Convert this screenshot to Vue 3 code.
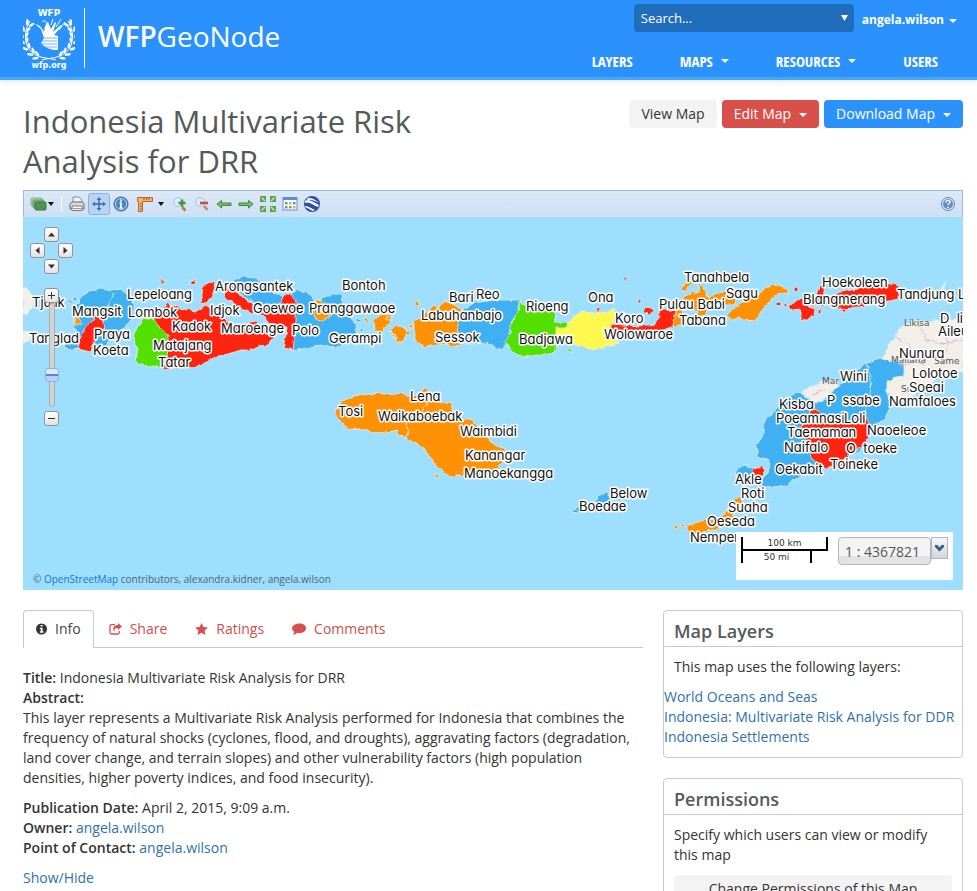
<script setup>
import { ref } from 'vue'

const scale = ref('1 : 4367821')
const zoom = ref(27)
const search = ref('')

const color = { b: '#3fb1f2', r: '#ff2410', o: '#ff9204', g: '#53e000', y: '#fff94f', w: '#f2efe9' }

const shapes = [
  ['w', '23,288 27,288 32,295 33,308 26,315 23,315'],
  ['w', '23,331 30,332 31,340 23,343'],
  ['b', '76,304 82,296 90,291 100,288 107,289 113,291 122,290 133,299 133,318 124,327 118,334 110,339 104,350 80,349 72,350 62,345 76,340 74,318'],
  ['r', '97,308 102,316 104,328 95,338 91,352 78,349 80,339 86,327 94,318'],
  ['o', '74,319 80,319 82,322 80,325 74,325'],
  ['r', '153,319 168,303 180,308 195,312 206,305 216,310 226,321 238,326 256,322 268,330 277,334 268,345 260,346 252,350 240,350 228,354 215,357 200,366 180,368 163,370 160,340'],
  ['g', '146,317 155,321 168,335 168,345 167,358 163,370 154,366 148,367 136,362 138,349 133,338 138,325'],
  ['r', '201,303 203,286 207,283 216,281 214,291 207,304'],
  ['r', '191,281 196,281 195,284 191,285'],
  ['r', '222,286 233,290 244,297 257,307 253,314 238,308 226,297'],
  ['b', '229,284 236,279 244,277 257,278 264,286 270,292 284,297 280,304 268,309 256,303 246,298 238,291 229,289'],
  ['b', '291,292 306,291 313,299 320,305 320,297 328,295 341,295 342,306 350,317 356,324 356,334 346,342 334,348 320,345 305,348 293,351'],
  ['r', '254,309 270,305 280,303 286,295 291,292 296,303 296,327 293,350 283,348 287,328 273,325 263,316'],
  ['o', '315,309 318,299 325,305 332,309 331,316 320,321 315,317'],
  ['o', '374,320 382,314 392,315 392,321 385,327 382,334 375,331'],
  ['o', '397,326 405,327 407,332 403,344 396,341 396,334 389,331'],
  ['o', '414,321 424,316 434,306 438,308 444,301 451,303 458,307 463,311 460,346 444,344 425,347 414,340'],
  ['b', '459,311 475,303 487,301 500,300 519,300 520,310 512,320 511,333 508,342 502,350 486,343 470,344 458,343 457,334'],
  ['g', '519,302 529,307 540,309 554,312 556,322 567,322 568,328 557,330 556,351 548,354 522,357 512,351 505,342 511,332 511,322 518,312'],
  ['y', '556,328 566,328 572,318 580,312 596,313 608,312 616,308 614,319 612,339 619,343 602,347 594,350 581,347 570,342 556,338'],
  ['r', '611,324 624,325 640,326 655,324 660,318 658,310 677,310 674,326 663,330 644,334 628,332 611,332'],
  ['r', '644,309 648,307 653,310 651,314 645,313'],
  ['o', '676,311 682,308 685,320 680,326 673,326'],
  ['o', '684,298 692,292 699,292 700,283 706,293 709,298 716,295 722,290 732,290 736,298 735,305 724,305 713,304 704,315 698,317 697,310 689,308 684,303'],
  ['o', '681,287 691,279 693,283 684,290'],
  ['o', '725,316 736,307 746,300 757,296 762,290 774,284 787,288 788,293 777,294 771,301 765,307 758,315 756,321 743,320 739,317 733,320'],
  ['r', '788,307 796,301 802,298 805,305 814,309 813,315 807,320 801,319 801,310 791,311'],
  ['r', '811,307 820,285 825,287 823,297 831,304'],
  ['r', '830,296 846,290 863,287 880,285 893,283 899,286 898,299 885,302 874,302 860,308 838,309 830,307'],
  ['w', '963,318 952,320 940,321 929,321 917,321 903,325 896,333 896,338 889,345 883,357 880,363 892,367 903,366 905,373 891,377 885,379 886,389 893,398 904,400 915,393 928,389 936,378 952,375 963,372'],
  ['w', '802,393 811,387 823,381 836,379 839,387 829,393 823,398 820,406 811,399'],
  ['w', '940,292 945,283 943,293'],
  ['b', '790,397 798,391 806,397 815,403 824,402 832,392 843,384 855,372 866,363 879,358 891,361 904,364 904,376 896,377 887,381 887,394 891,405 885,418 876,425 870,426 865,445 856,454 843,456 838,465 820,468 800,476 786,486 765,487 759,482 768,473 770,461 757,456 757,444 764,434 765,419 776,410'],
  ['r', '811,407 818,411 835,422 850,421 862,420 866,417 870,425 869,437 862,447 850,454 844,460 841,467 824,468 811,458 808,447 804,437 800,427 808,419'],
  ['b', '737,471 746,464 749,468 759,470 758,482 746,484 736,481'],
  ['r', '752,470 761,466 766,470 761,479 753,475'],
  ['o', '688,526 701,521 714,519 725,513 733,502 741,494 742,506 734,514 733,522 722,528 708,531 692,534 688,531'],
  ['b', '593,504 600,494 608,492 612,501 602,507'],
  ['b', '571,512 579,507 585,509 577,513'],
  ['o', '335,411 342,401 353,397 369,394 383,393 395,395 399,393 411,398 421,392 425,386 429,392 439,401 451,404 454,417 463,420 471,418 478,427 488,439 495,446 504,448 507,455 501,463 495,471 474,479 464,476 450,476 439,468 432,460 424,448 412,441 402,436 396,431 384,432 376,434 367,430 350,429 340,421']
]

const specks = [
  [75, 299, 'b'], [70, 302, 'b'], [130, 334, 'b'], [162, 282, 'r'], [358, 320, 'b'], [361, 330, 'b'],
  [388, 318, 'o'], [393, 335, 'o'], [411, 327, 'o'], [418, 304, 'o'], [408, 333, 'o'], [598, 310, 'r'],
  [625, 279, 'r'], [640, 301, 'r'], [570, 350, 'g'], [796, 289, 'r'], [779, 304, 'r'], [820, 312, 'r'],
  [437, 476, 'o'], [676, 527, 'o'], [683, 526, 'o'], [785, 305, 'r'], [844, 310, 'r'], [366, 320, 'o']
]

const towns = [
  ['Tjulik', 32, 307], ['Tanglad', 29, 343], ['Mangsit', 72, 316], ['Praya', 94, 339], ['Koeta', 93, 355],
  ['Lepeloang', 127, 299], ['Lombok', 128, 317], ['Kadok', 172, 331], ['Idjok', 210, 315],
  ['Arongsantek', 215, 291], ['Goewoe', 253, 313], ['Maroenge', 221, 333], ['Polo', 292, 335],
  ['Matajang', 153, 350], ['Tatar', 158, 367], ['Bontoh', 342, 290], ['Pranggawaoe', 309, 313],
  ['Gerampi', 329, 343], ['Bari', 449, 302], ['Reo', 476, 299], ['Labuhanbajo', 421, 320],
  ['Sessok', 435, 342], ['Rioeng', 526, 311], ['Badjawa', 519, 344], ['Ona', 588, 302],
  ['Koro', 615, 323], ['Wolowaroe', 604, 339], ['Pulau Babi', 659, 309], ['Tabana', 679, 325],
  ['Tanahbela', 684, 282], ['Sagu', 726, 298], ['Hoekoleen', 822, 287], ['Blangmerang', 803, 304],
  ['Tandjung Li', 897, 299], ['D  li', 940, 323], ['Aileu', 938, 336], ['Nunura', 899, 358],
  ['Lolotoe', 912, 378], ['Soeai', 909, 392], ['Namfaloes', 889, 406], ['Wini', 840, 381],
  ['P  ssabe', 827, 405], ['Kisba', 779, 409], ['Poeamnasi', 776, 423], ['Loli', 844, 423],
  ['Taemaman', 787, 437], ['Naoeleoe', 867, 435], ['Naifalo', 784, 452], ['O  toeke', 846, 453],
  ['Toineke', 830, 469], ['Oekabit', 775, 474], ['Akle', 735, 484], ['Roti', 741, 498],
  ['Suaha', 728, 512], ['Oeseda', 707, 526], ['Nemper', 690, 542], ['Below', 610, 498],
  ['Boedae', 579, 511], ['Lena', 410, 401], ['Tosi', 338, 416], ['Waikaboebak', 378, 421],
  ['Waimbidi', 460, 436], ['Kanangar', 465, 460], ['Manoekangga', 464, 478]
]

const basemap = [['Likisa', 904, 326], ['Maliana', 891, 363], ['Same', 934, 364], ['Mar', 822, 384], ['Su', 901, 392]]

// Leaves of the laurel wreath: position along each branch and tilt
const leaves = [
  [28, 22, 30], [25, 28, 10], [24, 34, -5], [25, 40, -20], [28, 46, -40], [33, 51, -55], [38, 54, -70]
]
</script>

<template>
  <header class="top">
    <a class="brand" href="#">
      <svg class="emblem" viewBox="0 0 52 64" aria-hidden="true">
        <text x="26" y="10" class="emblem-top">WFP</text>
        <g v-for="side in [1, -1]" :key="side" :transform="side === 1 ? '' : 'translate(52 0) scale(-1 1)'">
          <path d="M7 15C0 26 0 44 15 50c7 3 13 2 18 4" fill="none" stroke="#fff" stroke-width="1" />
          <g v-for="(l, i) in leaves" :key="i" :transform="`translate(${l[0] - 23} ${l[1] - 3}) rotate(${l[2]})`">
            <ellipse cx="-2" cy="-2" rx="1.3" ry="3.2" transform="rotate(-28 -2 -2)" fill="#fff" />
            <ellipse cx="3" cy="-2" rx="1.3" ry="3" transform="rotate(30 3 -2)" fill="#fff" />
          </g>
        </g>
        <path d="M12 18c5 1 7 4 9 8l1-6 3-4 3 7 4-7 1 1-3 9 8-7 1 1-8 9 4 1v14c-6 0-12-1-17-7l3-5-3-9z" fill="#fff" />
        <path d="M16 35h18M18 38h16M22 41h12M18 32h16" stroke="#2b92fd" stroke-width="0.7" />
        <path d="M19 16c2-2 5-1 5 2M33 21l5-8M36 24l6-8M28 19l2-6" stroke="#fff" fill="none" stroke-width="1" />
        <text x="26" y="62" class="emblem-base">wfp.org</text>
      </svg>
      <span class="brand-name"><b>WFP</b>GeoNode</span>
    </a>
    <div class="top-right">
      <div class="account">
        <div class="search">
          <input v-model="search" type="text" placeholder="Search..." aria-label="Search" />
          <svg viewBox="0 0 8 7" width="7" height="6" aria-hidden="true"><path d="M0 0h8L4 7z" fill="#fff" /></svg>
        </div>
        <button type="button" class="user">angela.wilson<i class="caret"></i></button>
      </div>
      <nav class="menu">
        <a href="#">LAYERS</a>
        <a href="#">MAPS<i class="caret"></i></a>
        <a href="#">RESOURCES<i class="caret"></i></a>
        <a href="#">USERS</a>
      </nav>
    </div>
  </header>

  <main class="page">
    <div class="heading">
      <h1>Indonesia Multivariate Risk Analysis for DRR</h1>
      <div class="actions">
        <button type="button" class="btn plain">View Map</button>
        <button type="button" class="btn danger">Edit Map<i class="caret"></i></button>
        <button type="button" class="btn primary">Download Map<i class="caret"></i></button>
      </div>
    </div>

    <section class="viewer">
      <div class="toolbar">
        <button type="button" class="tool layers" aria-label="Layers">
          <svg viewBox="0 0 18 16" width="18" height="16">
            <rect x="1" y="2" width="11" height="8" rx="1" fill="#a9cba8" stroke="#8db58c" />
            <rect x="3" y="4" width="11" height="8" rx="1" fill="#7fb17c" stroke="#6ba26b" />
            <rect x="5" y="6" width="11" height="8" rx="1" fill="#4e9450" stroke="#3d7a40" />
          </svg>
          <i class="arrow"></i>
        </button>
        <span class="divider"></span>
        <button type="button" class="tool" aria-label="Print">
          <svg viewBox="0 0 16 16" width="16" height="16">
            <path d="M4 8V1h6l3 3v4z" fill="#e8f3ff" stroke="#6f8fb5" />
            <path d="M1 8l2-2h10l2 2v5H1z" fill="#ddd" stroke="#666" />
            <path d="M3 10h10v4.500H3z" fill="#fff" stroke="#777" /><path d="M4 12.500h8" stroke="#999" />
          </svg>
        </button>
        <button type="button" class="tool active" aria-label="Pan map">
          <svg viewBox="0 0 16 16" width="16" height="16">
            <path d="M8 3v10M3 8h10" stroke="#3a64a8" stroke-width="1.300" />
            <path d="M8 1l2.500 3h-5zM8 15l-2.500-3h5zM1 8l3-2.500v5zM15 8l-3 2.500v-5z" fill="#4270b5" />
          </svg>
        </button>
        <button type="button" class="tool" aria-label="Feature info">
          <svg viewBox="0 0 16 16" width="16" height="16">
            <circle cx="8" cy="8" r="7" fill="#4b83c3" stroke="#3867a6" /><circle cx="8" cy="8" r="5.600" fill="none" stroke="#b9d3ef" />
            <path d="M8 3.500v2M6.500 7H8v5M6.500 12h3" stroke="#fff" stroke-width="1.700" fill="none" />
          </svg>
        </button>
        <button type="button" class="tool measure" aria-label="Measure">
          <svg viewBox="0 0 16 16" width="16" height="16">
            <path d="M0.500 1.500h15v4H5.500v10h-4v-10h-1z" fill="#f6b26b" stroke="#b56a28" />
            <path d="M7 2v2M9.500 2v2M12 2v2M3 8h2M3 10.500h2M3 13h2" stroke="#a65b1e" />
          </svg>
          <i class="arrow"></i>
        </button>
        <button type="button" class="tool" aria-label="Zoom in">
          <svg viewBox="0 0 16 16" width="16" height="16">
            <circle cx="6" cy="6" r="4.500" fill="#d6ebff" stroke="#a8c2db" /><path d="M10 11l3.500 3.500" stroke="#b07b45" stroke-width="2.500" />
            <path d="M10 3.500v7M6.500 7h7" stroke="#3f9a3a" stroke-width="2.600" />
          </svg>
        </button>
        <button type="button" class="tool" aria-label="Zoom out">
          <svg viewBox="0 0 16 16" width="16" height="16">
            <circle cx="6" cy="6" r="4.500" fill="#d6ebff" stroke="#a8c2db" /><path d="M10 10l3.500 4" stroke="#c08a63" stroke-width="2.500" />
            <path d="M6 7h8" stroke="#e0433f" stroke-width="2.600" />
          </svg>
        </button>
        <button type="button" class="tool" aria-label="Previous extent">
          <svg viewBox="0 0 16 16" width="16" height="16"><path d="M1 8l4.500-3.500V7H15v2.500H5.500V12z" fill="#74c265" stroke="#36893a" /></svg>
        </button>
        <button type="button" class="tool" aria-label="Next extent">
          <svg viewBox="0 0 16 16" width="16" height="16"><path d="M15 8l-4.500-3.500V7H1v2.500h9.500V12z" fill="#74c265" stroke="#36893a" /></svg>
        </button>
        <button type="button" class="tool" aria-label="Full extent">
          <svg viewBox="0 0 16 16" width="16" height="16">
            <path d="M0 0h6v6H0zM10 0h6v6h-6zM0 10h6v6H0zM10 10h6v6h-6z" fill="#55a14f" />
            <path d="M1.500 1.500L5 5M14.500 1.500L11 5M1.500 14.500L5 11M14.500 14.500L11 11" stroke="#c4e6bd" stroke-width="1.500" />
          </svg>
        </button>
        <button type="button" class="tool" aria-label="Legend">
          <svg viewBox="0 0 16 16" width="16" height="16">
            <rect x="1" y="1.500" width="14" height="12.500" fill="#fff" stroke="#5c8fc9" /><path d="M1 3h14" stroke="#5c8fc9" stroke-width="2" />
            <path d="M3 6h2.500v2.500H3zM7 10h2.500v2.500H7z" fill="#5faa55" /><path d="M7 6h2.500v2.500H7zM11 10h2.500v2.500H11z" fill="#f0a63c" /><path d="M11 6h2.500v2.500H11zM3 10h2.500v2.500H3z" fill="#5c8fc9" />
          </svg>
        </button>
        <button type="button" class="tool" aria-label="3D viewer">
          <svg viewBox="0 0 16 16" width="16" height="16">
            <circle cx="8" cy="8" r="8" fill="#2b4fa8" />
            <path d="M1 5c4-3 8 1 14 4l-1 2C9 9 5 5 1 7zM3 2.500C8 1 11 4 15 7c-4-2-8-4-12-3zM1 10c4 0 7 3 10 4l-2 1c-3-1-5-3-8-4z" fill="#fff" />
          </svg>
        </button>
        <button type="button" class="tool help" aria-label="Help">
          <svg viewBox="0 0 16 16" width="16" height="16">
            <circle cx="8" cy="8" r="6.500" fill="#dcebfa" stroke="#5c86b8" /><circle cx="8" cy="8" r="5" fill="#5f8fc6" />
            <path d="M6 6.500c0-3 4-2.500 4-0.500 0 1.500-2 1.500-2 3M8 10.500v1.500" stroke="#fff" stroke-width="1.400" fill="none" />
          </svg>
        </button>
      </div>

      <div class="map">
        <svg class="canvas" viewBox="23 217 940 373" role="img" aria-label="Map of Indonesia risk layers">
          <defs>
            <filter id="coast" x="-5%" y="-5%" width="110%" height="110%" color-interpolation-filters="sRGB">
              <feTurbulence type="fractalNoise" baseFrequency="0.16" numOctaves="2" seed="4" />
              <feDisplacementMap in="SourceGraphic" scale="5" xChannelSelector="R" yChannelSelector="G" />
            </filter>
          </defs>
          <rect x="23" y="217" width="940" height="373" fill="#9edeff" />
          <g filter="url(#coast)" stroke="#e6f1e8" stroke-width="0.8" stroke-linejoin="round">
            <polygon v-for="(s, i) in shapes" :key="i" :points="s[1]" :fill="color[s[0]]" />
            <circle v-for="(s, i) in specks" :key="'s' + i" :cx="s[0]" :cy="s[1]" r="2" :fill="color[s[2]]" />
            <g fill="none">
              <path d="M113 293l-5 12-4 15M424 393l2 12-6 10M405 420l4 14-5 5M867 364l4 14-1 20-6 14" />
              <path d="M896 338l14 6 3 12 16 4M917 322l10 18 14 4 22-4M900 366l18-6 10 14 24-4M944 325l4 20-8 26M812 395l14-6" stroke="#dcaacb" />
            </g>
          </g>
          <g class="base-label"><text v-for="t in basemap" :key="t[0]" :x="t[1]" :y="t[2]">{{ t[0] }}</text></g>
          <g class="town"><text v-for="t in towns" :key="t[0]" :x="t[1]" :y="t[2]">{{ t[0] }}</text></g>
        </svg>

        <div class="pan-pad">
          <button type="button" class="key n" aria-label="Pan north"><svg viewBox="0 0 9 9" width="9" height="9"><path d="M1 6.500L4.500 2.500 8 6.500z" /></svg></button>
          <button type="button" class="key w" aria-label="Pan west"><svg viewBox="0 0 9 9" width="9" height="9"><path d="M6.500 1L2.500 4.500 6.500 8z" /></svg></button>
          <button type="button" class="key e" aria-label="Pan east"><svg viewBox="0 0 9 9" width="9" height="9"><path d="M2.500 1L6.500 4.500 2.500 8z" /></svg></button>
          <button type="button" class="key s" aria-label="Pan south"><svg viewBox="0 0 9 9" width="9" height="9"><path d="M1 2.500L4.500 6.500 8 2.500z" /></svg></button>
        </div>
        <div class="zoom-bar">
          <button type="button" class="key" aria-label="Zoom in one level"><svg viewBox="0 0 9 9" width="9" height="9"><path d="M1 4h7v1H1zM4 1h1v7H4z" /></svg></button>
          <input v-model="zoom" type="range" min="0" max="100" aria-label="Zoom level" />
          <button type="button" class="key" aria-label="Zoom out one level"><svg viewBox="0 0 9 9" width="9" height="9"><path d="M1 4h7v1H1z" /></svg></button>
        </div>

        <p class="credits">© <a href="#">OpenStreetMap</a> contributors, alexandra.kidner, angela.wilson</p>

        <div class="scale-box">
          <div class="scale-line">
            <span class="km">100 km</span>
            <span class="mi">50 mi</span>
          </div>
          <div class="combo">
            <input v-model="scale" type="text" aria-label="Map scale" />
            <button type="button" aria-label="Choose scale">
              <svg viewBox="0 0 9 7" width="9" height="7"><path d="M0 0h2.500l2 2.500L6.500 0H9v2L4.500 6.500 0 2z" fill="#3c5a8c" /></svg>
            </button>
          </div>
        </div>
      </div>
    </section>

    <div class="columns">
      <section class="details">
        <nav class="tabs">
          <a class="current" href="#">
            <svg viewBox="0 0 12 12" width="11" height="12"><circle cx="6" cy="6" r="6" fill="#333" /><path d="M5 1.500h2.200v1.800H5zM4.200 4.500h3v4h1V10h-4V8.500h1V6h-1z" fill="#fff" /></svg>Info
          </a>
          <a href="#">
            <svg viewBox="0 0 13 12" width="13" height="12"><path d="M6 1.600H2.500a1.500 1.500 0 0 0-1.500 1.500v6.400A1.500 1.500 0 0 0 2.500 11h6.300a1.500 1.500 0 0 0 1.500-1.500V8" fill="none" stroke="#d9504b" stroke-width="1.300" /><path d="M9 0l4 3.500L9 7V5C6 5 5 6 5.500 9 3 5.500 4.500 2 9 2z" fill="#d9504b" /></svg>Share
          </a>
          <a href="#">
            <svg viewBox="0 0 13 12" width="13" height="12"><path d="M6.500 0l1.900 4 4.600.6-3.400 3 .9 4.400-4-2.200-4 2.200.9-4.400L0 4.600 4.600 4z" fill="#d9504b" /></svg>Ratings
          </a>
          <a href="#">
            <svg viewBox="0 0 14 12" width="14" height="12"><path d="M7.500 0.500c3.600 0 6.500 2 6.500 4.700S11 10 7.500 10c-.8 0-1.500 0-2.100-.3C4 11 2.500 11.700.8 11.800 1.800 11 2.200 10 2.200 8.700.8 7.800 0 6.700 0 5.200.3 2.500 3.900.5 7.500.5z" fill="#d9504b" /></svg>Comments
          </a>
        </nav>
        <p>
          <b>Title:</b> Indonesia Multivariate Risk Analysis for DRR<br />
          <b>Abstract:</b><br />
          This layer represents a Multivariate Risk Analysis performed for Indonesia that combines the
          frequency of natural shocks (cyclones, flood, and droughts), aggravating factors (degradation,
          land cover change, and terrain slopes) and other vulnerability factors (high population
          densities, higher poverty indices, and food insecurity).
        </p>
        <p>
          <b>Publication Date:</b> April 2, 2015, 9:09 a.m.<br />
          <b>Owner:</b> <a href="#">angela.wilson</a><br />
          <b>Point of Contact:</b> <a href="#">angela.wilson</a>
        </p>
        <p><a href="#">Show/Hide</a></p>
      </section>

      <aside class="side">
        <section class="panel">
          <h2>Map Layers</h2>
          <p>This map uses the following layers:</p>
          <ul>
            <li><a href="#">World Oceans and Seas</a></li>
            <li><a href="#">Indonesia: Multivariate Risk Analysis for DDR</a></li>
            <li><a href="#">Indonesia Settlements</a></li>
          </ul>
        </section>
        <section class="panel">
          <h2>Permissions</h2>
          <p>Specify which users can view or modify this map</p>
          <button type="button" class="btn plain">Change Permissions of this Map</button>
        </section>
      </aside>
    </div>
  </main>
</template>

<style>
body {
  background: #fff;
  color: #333;
  font: 14px/20px "Open Sans", "Noto Sans", sans-serif;
}
</style>

<style scoped>
a { color: #2f72ab; text-decoration: none; }
b { font-weight: 600; }
button { font: inherit; cursor: pointer; }

.caret {
  display: inline-block;
  border: 4px solid transparent;
  border-top-color: currentColor;
  border-bottom: 0;
  margin-left: 8px;
  vertical-align: middle;
}

.top {
  display: flex;
  justify-content: space-between;
  height: 77px;
  padding: 0 20px 0 23px;
  background: #2b92fd;
  border-bottom: 3px solid #45a8f5;
  box-shadow: 0 1px 6px rgba(0, 0, 0, 0.12);
}
.brand { display: flex; align-items: center; padding-bottom: 2px; color: #fff; }
.emblem { width: 52px; height: 64px; }
.emblem text { fill: #fff; font-family: "DejaVu Sans", sans-serif; font-weight: 700; text-anchor: middle; }
.emblem-top { font-size: 9px; }
.emblem-base { font-size: 8px; }
.brand-name {
  display: flex;
  align-items: center;
  height: 60px;
  margin-left: 9px;
  padding-left: 13px;
  padding-bottom: 4px;
  box-sizing: border-box;
  border-left: 1px solid #fff;
  font-size: 28px;
}
.top-right { display: flex; flex-direction: column; align-items: flex-end; }
.account { display: flex; align-items: center; gap: 8px; padding-top: 4px; }
.search {
  display: flex;
  align-items: center;
  width: 220px;
  height: 28px;
  box-sizing: border-box;
  padding: 0 6px 0 7px;
  background: #206dbc;
  border-radius: 4px;
}
.search input {
  flex: 1;
  min-width: 0;
  padding: 0;
  border: 0;
  outline: 0;
  background: none;
  color: #fff;
  font: 13px/20px "Open Sans", sans-serif;
}
.search input::placeholder { color: #fff; opacity: 1; }
.user {
  padding: 4px 0 0;
  border: 0;
  background: none;
  color: #fff;
  font-size: 12px;
  font-weight: 700;
}
.user .caret { margin-left: 5px; }
.menu { display: flex; gap: 47px; padding: 19px 19px 0 0; }
.menu a {
  display: flex;
  align-items: center;
  color: #fff;
  font: 700 15px/20px "Open Sans Condensed", "Roboto Condensed", "Liberation Sans Narrow", "Liberation Sans", sans-serif;
}

.page { padding: 21px 14px 20px 23px; }
.heading { display: flex; justify-content: space-between; align-items: flex-start; }
h1 {
  flex: 0 1 480px;
  margin: 0;
  color: #535a58;
  font-size: 31px;
  font-weight: 400;
  line-height: 40px;
}
.actions { display: flex; gap: 5px; }
.btn {
  height: 28px;
  margin-top: -1px;
  padding: 0 12px;
  border: 0;
  border-radius: 4px;
  font-size: 14px;
  white-space: nowrap;
}
.plain { background: #f3f3f3; color: #333; }
.danger { background: #d9504b; color: #fff; }
.primary { background: #2b92fd; color: #fff; }

.viewer { margin-top: 9px; }
.toolbar {
  display: flex;
  align-items: center;
  height: 26px;
  padding: 0 3px 0 5px;
  border: 1px solid #99bbe8;
  border-bottom: 0;
  background: linear-gradient(#dde8f6, #cddff3);
}
.tool {
  display: flex;
  align-items: center;
  justify-content: center;
  width: 22px;
  height: 22px;
  padding: 0;
  box-sizing: border-box;
  border: 1px solid transparent;
  border-radius: 3px;
  background: none;
}
.tool svg { flex: none; }
.layers { width: 26px; }
.measure { gap: 5px; width: 37px; }
.tool.active { border-color: #8fb0dc; background: #b9d3f3; }
.help { margin-left: auto; }
.arrow { border: 3px solid transparent; border-top: 4px solid #111; border-bottom: 0; }
.divider { width: 1px; height: 14px; margin: 0 4px 0 6px; background: #fff; }

.map { position: relative; overflow: hidden; }
.canvas { display: block; width: 100%; height: auto; }
.town text {
  fill: #111;
  stroke: #fff;
  stroke-width: 3px;
  stroke-linejoin: round;
  paint-order: stroke;
  white-space: pre;
  font: 13px Inter, Lato, sans-serif;
  font-feature-settings: "cv11";
}
.base-label text { fill: #555; font: 9px "DejaVu Sans", sans-serif; }

.key {
  display: flex;
  align-items: center;
  justify-content: center;
  width: 15px;
  height: 15px;
  padding: 0;
  box-sizing: border-box;
  border: 1px solid #8f9499;
  border-radius: 3px;
  background: linear-gradient(#fff, #e2e2e2);
}
.key svg { fill: #333; }
.pan-pad {
  position: absolute;
  top: 10px;
  left: 7px;
  display: grid;
  grid-template: repeat(3, 16px) / repeat(3, 14px);
}
.n { grid-area: 1 / 2; }
.w { grid-area: 2 / 1; }
.e { grid-area: 2 / 3; }
.s { grid-area: 3 / 2; }
.zoom-bar {
  position: absolute;
  top: 71px;
  left: 21px;
  display: flex;
  flex-direction: column;
  align-items: center;
}
.zoom-bar input {
  appearance: none;
  writing-mode: vertical-lr;
  direction: rtl;
  width: 14px;
  height: 104px;
  margin: 0 0 4px;
  background: none;
}
.zoom-bar input::-webkit-slider-runnable-track {
  width: 6px;
  background: #d4d4d4;
  border: 1px solid #aaa;
  border-radius: 3px;
  box-sizing: border-box;
}
.zoom-bar input::-webkit-slider-thumb {
  appearance: none;
  width: 14px;
  height: 14px;
  margin-left: -5px;
  box-sizing: border-box;
  border: 1px solid #8fb2e6;
  border-radius: 3px;
  background: linear-gradient(#dfeaff 45%, #5b86c8 45%, #5b86c8 55%, #b5d0fa 55%);
}

.credits {
  position: absolute;
  bottom: 3px;
  left: 10px;
  margin: 0;
  color: #4c6470;
  font: 10px/16px "Open Sans", sans-serif;
}
.credits a { color: #1279c4; }

.scale-box {
  position: absolute;
  right: 10px;
  bottom: 10px;
  display: flex;
  gap: 10px;
  width: 217px;
  height: 48px;
  padding: 5px;
  box-sizing: border-box;
  background: #fff;
}
.scale-line { display: flex; flex-direction: column; width: 87px; color: #333; font: 9px/12px "DejaVu Sans", sans-serif; text-align: center; }
.km { height: 12px; border: solid #000; border-width: 0 2px 2px; }
.mi { width: 67px; height: 12px; border: solid #000; border-width: 0 2px; }
.combo { display: flex; align-items: flex-start; }
.combo input {
  width: 93px;
  height: 28px;
  padding: 0 6px;
  box-sizing: border-box;
  border: 1px solid #b5b5b5;
  border-radius: 4px;
  background: linear-gradient(#f3f3f3 68%, #e3e3e3 68%);
  color: #555;
  font: 14px/20px "Open Sans", sans-serif;
}
.combo button {
  display: flex;
  align-items: center;
  justify-content: center;
  width: 17px;
  height: 22px;
  padding: 0;
  border: 1px solid #b0b5bf;
  background: linear-gradient(#f6f6f6, #d2d6de);
}

.columns { display: flex; gap: 20px; align-items: flex-start; margin-top: 20px; }
.details { flex: 1; min-width: 0; }
.details p { margin: 0 0 10px; }
.tabs { display: flex; gap: 2px; margin-bottom: 20px; border-bottom: 1px solid #c9c9c9; }
.tabs a {
  display: flex;
  align-items: center;
  gap: 8px;
  height: 36px;
  padding: 0 12px;
  border: 1px solid transparent;
  border-bottom: 0;
  color: #cf4f4b;
}
.tabs .current {
  margin-bottom: -1px;
  padding-bottom: 1px;
  border-color: #c9c9c9;
  border-radius: 4px 4px 0 0;
  background: #fff;
  color: #444;
}

.side { display: flex; flex-direction: column; gap: 20px; flex: 0 0 300px; }
.panel { border: 1px solid #c9c9c9; border-radius: 4px; box-sizing: border-box; padding-bottom: 10px; }
.panel h2 {
  margin: 0;
  padding: 10px 10px 5px;
  border-bottom: 1px solid #c9c9c9;
  color: #555a5c;
  font-size: 18px;
  font-weight: 600;
  line-height: 20px;
}
.panel p { margin: 10px; }
.panel ul { margin: 0; padding: 0; list-style: none; white-space: nowrap; }
.panel .btn { display: block; width: calc(100% - 20px); margin: 0 10px; }
</style>
